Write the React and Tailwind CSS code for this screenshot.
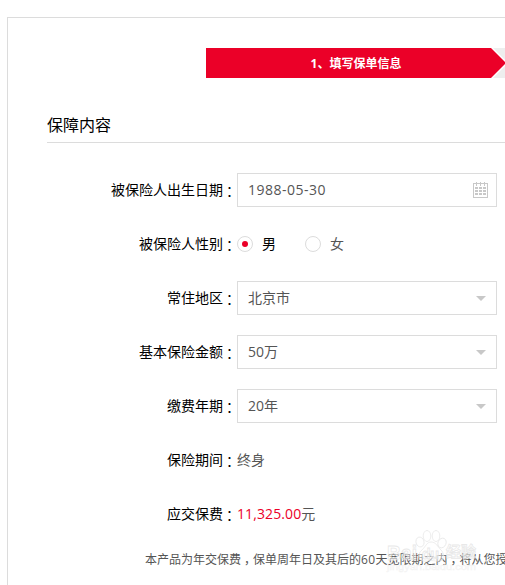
import React, { useState } from 'react';

const Label = ({ children }) => (
  <div className="w-[190px] shrink-0 pb-px text-right text-black">
    {children}
    <span className="relative top-px left-[3px]">：</span>
  </div>
);

const Row = ({ label, children }) => (
  <div className="flex h-[34px] items-center">
    <Label>{label}</Label>
    {children}
  </div>
);

const CalendarIcon = () => (
  <svg className="h-4 w-[15px]" viewBox="0 0 15 16" fill="none" shapeRendering="crispEdges">
    <path d="M.5 1.5h14v14H.5z" stroke="#c8c8c8" />
    <path d="M3.5 0v4M7.5 0v4M11.5 0v4" stroke="#c8c8c8" />
    <path
      d="M2 5h3v2H2zM6 5h3v2H6zM10 5h3v2h-3zM2 8h3v2H2zM6 8h3v2H6zM10 8h3v2h-3zM2 11h3v2H2zM6 11h3v2H6zM10 11h3v2h-3z"
      fill="#c8c8c8"
    />
  </svg>
);

const Caret = () => (
  <svg className="mr-0.5 h-[5px] w-[10px]" viewBox="0 0 10 5">
    <path d="M0 0h10L5 5z" fill="#c8c8c8" />
  </svg>
);

const Field = ({ value, icon }) => (
  <button className="flex h-[34px] w-[260px] shrink-0 items-center justify-between border border-[#dcdcdc] bg-white pr-2 pl-2.5 text-left">
    {value}
    {icon}
  </button>
);

const Radio = ({ text, checked, onClick }) => (
  <button onClick={onClick} className="flex items-center">
    <span className="mr-[9px] flex h-4 w-4 items-center justify-center rounded-full border border-[#dcdcdc]">
      {checked && <span className="h-1.5 w-1.5 rounded-full bg-[#eb0028]" />}
    </span>
    <span className={checked ? 'text-black' : ''}>{text}</span>
  </button>
);

const Watermark = () => (
  <svg className="absolute top-[511px] left-[378px] h-[64px] w-[106px]" viewBox="0 0 106 64">
    <g fill="#fff" fillOpacity="0.45" stroke="#e2e2e2" strokeOpacity="0.8" strokeWidth="0.8">
      <ellipse cx="42" cy="31" rx="4" ry="5" transform="rotate(-15 42 31)" />
      <ellipse cx="49" cy="25" rx="3.800" ry="5.5" />
      <ellipse cx="58" cy="25" rx="3.800" ry="5.5" />
      <ellipse cx="64" cy="32" rx="4" ry="5" transform="rotate(25 64 32)" />
      <path d="M53 31c-4 0-5 4-9 8-4 3-5 10 1 11 3 .7 5-.5 8-.5s6 1.200 9 .5c6-1 4-8 1-11-4-4-5-8-10-8z" />
      <text x="9" y="49" fontSize="21" fontWeight="bold" textLength="30" lengthAdjust="spacingAndGlyphs" fontFamily="Liberation Sans, sans-serif">Bai</text>
      <text x="44" y="48" fontSize="14" fontWeight="bold" fontFamily="Liberation Sans, sans-serif">du</text>
      <text x="68" y="46" fontSize="15" fontWeight="bold" fontFamily="Noto Sans CJK SC, sans-serif">经验</text>
    </g>
    <text x="9" y="59" fontSize="9" fill="#fff" fillOpacity="0.5" stroke="#eaeaea" strokeOpacity="0.6" strokeWidth="0.5" textLength="89" lengthAdjust="spacingAndGlyphs" fontFamily="Liberation Sans, sans-serif">jingyan.baidu.com</text>
  </svg>
);

const App = () => {
  const [gender, setGender] = useState('male');

  return (
    <div className="relative h-[585px] w-full overflow-hidden bg-white pt-[17px] pl-[7px] font-['Open_Sans','Noto_Sans_CJK_SC',sans-serif] text-sm text-[#555]">
      <div className="h-[620px] w-[600px] border border-[#dcdcdc] pt-[30px] pl-[39px]">
        <div className="ml-[159px] flex h-[30px] bg-[#eee]">
          <div className="w-[285px] bg-[#eb0028] pt-px pl-[15px] text-center text-xs leading-[30px] font-bold text-white">
            1、填写保单信息
          </div>
          <svg className="h-[30px] w-[18px]" viewBox="0 0 18 30">
            <path d="M0 0h2l15 15L2 30H0z" fill="#fff" />
            <path d="M0 0l15 15L0 30z" fill="#eb0028" />
          </svg>
        </div>

        <h2 className="mt-[30px] h-[35px] border-b border-[#dcdcdc] text-base leading-[35px] text-black">
          保障内容
        </h2>

        <div className="mt-[30px] flex flex-col gap-5">
          <Row label="被保险人出生日期">
            <Field
              value={<span className="tracking-[0.5px]">1988-05-30</span>}
              icon={<CalendarIcon />}
            />
          </Row>
          <Row label="被保险人性别">
            <div className="flex gap-[29px]">
              <Radio text="男" checked={gender === 'male'} onClick={() => setGender('male')} />
              <Radio text="女" checked={gender === 'female'} onClick={() => setGender('female')} />
            </div>
          </Row>
          <Row label="常住地区">
            <Field value="北京市" icon={<Caret />} />
          </Row>
          <Row label="基本保险金额">
            <Field value="50万" icon={<Caret />} />
          </Row>
          <Row label="缴费年期">
            <Field value="20年" icon={<Caret />} />
          </Row>
          <Row label="保险期间">
            <span>终身</span>
          </Row>
          <Row label="应交保费">
            <span className="tracking-[0.1px] text-[#eb0028]">11,325.00</span>元
          </Row>
        </div>

        <p className="mt-[21px] pl-[98px] text-xs whitespace-nowrap">
          本产品为年交保费<span className="relative left-[3px]">，</span>
          保单周年日及其后的<span className="tracking-[0.3px]">60</span>天宽限期之内
          <span className="relative left-[3px]">，</span>
          将从您授权的
        </p>
      </div>
      <Watermark />
    </div>
  );
};

export default App;
